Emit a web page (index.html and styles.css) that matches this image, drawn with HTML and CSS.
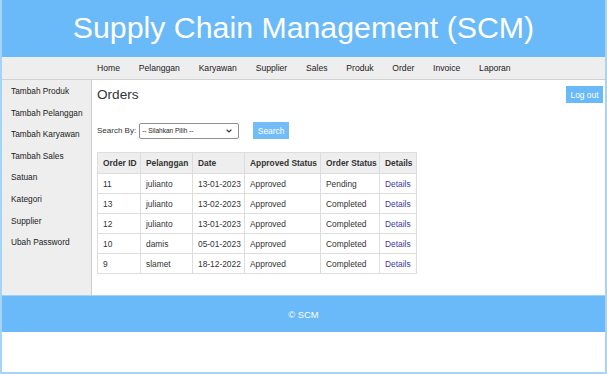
FILE: index.html
```html
<!DOCTYPE html>
<html>
<head>
<meta charset="utf-8">
    <title>Supply Chain Management (SCM)</title>
    <link rel="stylesheet" href="styles.css">
</head>
<body>
    <div class="page">
        <header class="top">
            <h1>Supply Chain Management (SCM)</h1>
        </header>

        <nav class="menu">
            <a href="#">Home</a>
            <a href="#">Pelanggan</a>
            <a href="#">Karyawan</a>
            <a href="#">Supplier</a>
            <a href="#">Sales</a>
            <a href="#">Produk</a>
            <a href="#">Order</a>
            <a href="#">Invoice</a>
            <a href="#">Laporan</a>
        </nav>

        <div class="main">
            <aside class="sidebar">
                <a href="#">Tambah Produk</a>
                <a href="#">Tambah Pelanggan</a>
                <a href="#">Tambah Karyawan</a>
                <a href="#">Tambah Sales</a>
                <a href="#">Satuan</a>
                <a href="#">Kategori</a>
                <a href="#">Supplier</a>
                <a href="#">Ubah Password</a>
            </aside>

            <section class="content">
                <button type="button" class="logout-btn">Log out</button>
                <h2>Orders</h2>

                <div class="search-row">
                    <label for="search">Search By:</label>
                    <select id="search" name="search">
                        <option>-- Silahkan Pilih --</option>
                    </select>
                    <button type="button" class="search-btn">Search</button>
                </div>

                <table class="orders">
                    <thead>
                        <tr>
                            <th class="c-id">Order ID</th>
                            <th class="c-cust">Pelanggan</th>
                            <th class="c-date">Date</th>
                            <th class="c-appr">Approved Status</th>
                            <th class="c-stat">Order Status</th>
                            <th class="c-det">Details</th>
                        </tr>
                    </thead>
                    <tbody>
                        <tr><td>11</td><td>julianto</td><td>13-01-2023</td><td>Approved</td><td>Pending</td><td><a href="#">Details</a></td></tr>
                        <tr><td>13</td><td>julianto</td><td>13-02-2023</td><td>Approved</td><td>Completed</td><td><a href="#">Details</a></td></tr>
                        <tr><td>12</td><td>julianto</td><td>13-01-2023</td><td>Approved</td><td>Completed</td><td><a href="#">Details</a></td></tr>
                        <tr><td>10</td><td>damis</td><td>05-01-2023</td><td>Approved</td><td>Completed</td><td><a href="#">Details</a></td></tr>
                        <tr><td>9</td><td>slamet</td><td>18-12-2022</td><td>Approved</td><td>Completed</td><td><a href="#">Details</a></td></tr>
                    </tbody>
                </table>
            </section>
        </div>

        <footer class="bottom">&copy; SCM</footer>
    </div>
</body>
</html>
```

FILE: styles.css
```css
body {
    margin: 0;
    font-family: "Liberation Sans", Arial, sans-serif;
    background-color: #fff;
}
.page {
    width: 607px;
    height: 374px;
    box-sizing: border-box;
    border: 2px solid #a6d4f7;
    border-top: none;
    background-color: #fff;
}
.top {
    height: 57px;
    background-color: #6ab9f8;
    display: flex;
    align-items: center;
    justify-content: center;
}
.top h1 {
    margin: 0;
    color: #fff;
    font-weight: normal;
    font-size: 30.3px;
    line-height: 1;
}
.menu {
    height: 22px;
    background-color: #eeeeee;
    border-bottom: 1px solid #cfcfcf;
    display: flex;
    align-items: center;
    gap: 18.8px;
    padding-left: 95px;
}
.menu a {
    color: #222;
    text-decoration: none;
    font-size: 8.6px;
}
.main {
    display: flex;
    height: 215px;
}
.sidebar {
    width: 90px;
    box-sizing: border-box;
    background-color: #eeeeee;
    border-right: 1px solid #cfcfcf;
    padding: 1px 0 0 9px;
    display: flex;
    flex-direction: column;
}
.sidebar a {
    color: #222;
    text-decoration: none;
    font-size: 8.3px;
    line-height: 21.6px;
}
.content {
    flex: 1;
    padding: 6px 2px 0 5px;
}
.content h2 {
    margin: 0;
    font-weight: normal;
    font-size: 13.6px;
    line-height: 18px;
    color: #333;
}
.logout-btn {
    float: right;
    background-color: #6ab9f8;
    color: #fff;
    border: none;
    font-family: inherit;
    font-size: 8.4px;
    width: 37px;
    height: 17px;
    padding: 0;
}
.search-row {
    display: flex;
    align-items: center;
    margin-top: 18px;
    height: 17px;
    font-size: 8px;
    color: #333;
}
.search-row label {
    margin-right: 3px;
}
.search-row select {
    -webkit-appearance: none;
    appearance: none;
    width: 100px;
    height: 16px;
    font-family: inherit;
    font-size: 6.5px;
    color: #222;
    border: 1px solid #8f8f8f;
    border-radius: 2px;
    background-color: #fff;
    background-image: url("data:image/svg+xml,%3Csvg xmlns='http://www.w3.org/2000/svg' width='6' height='4' viewBox='0 0 6 4'%3E%3Cpath d='M0.6 0.6 L3 3 L5.4 0.6' fill='none' stroke='%23333' stroke-width='1.2'/%3E%3C/svg%3E");
    background-repeat: no-repeat;
    background-position: right 6px center;
    padding: 0 2px;
    margin: 0;
}
.search-btn {
    margin-left: 14px;
    background-color: #72bdf9;
    color: #fff;
    border: none;
    font-family: inherit;
    font-size: 8.4px;
    width: 36px;
    height: 17px;
    padding: 0;
}
.orders {
    margin-top: 13px;
    border-collapse: collapse;
    table-layout: fixed;
    font-size: 8.4px;
    color: #333;
}
.orders th, .orders td {
    border: 1px solid #dddddd;
    text-align: left;
    padding: 0 0 0 5px;
    height: 19px;
}
.orders th {
    background-color: #eeeeee;
    font-weight: bold;
    height: 20px;
}
.orders a {
    color: #3b3ba0;
    text-decoration: none;
}
.c-id { width: 37px; }
.c-cust { width: 46px; }
.c-date { width: 46px; }
.c-appr { width: 70px; }
.c-stat { width: 53px; }
.c-det { width: 31px; }
.bottom {
    height: 36px;
    border-top: 1px solid #9fd2fa;
    background-color: #6ab9f8;
    color: #fff;
    font-size: 9.4px;
    display: flex;
    align-items: center;
    justify-content: center;
}
```
